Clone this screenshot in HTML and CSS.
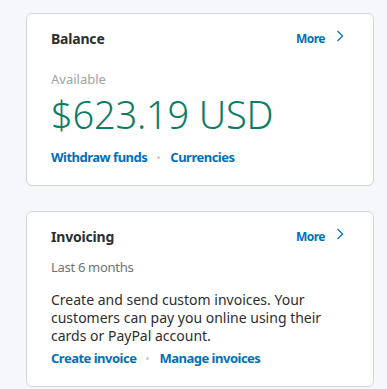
FILE: index.html
```html
<!DOCTYPE html>
<html lang="en">
<head>
    <meta charset="UTF-8">
    <meta name="viewport" content="width=device-width, initial-scale=1.0">
    <title>Summary</title>
    <link rel="stylesheet" href="styles.css">
</head>
<body>

    <div class="column">
        <div class="card" id="balance-card">
            <div class="card-head">
                <h2>Balance</h2>
                <a class="more" href="#">More
                    <svg class="chevron" width="8" height="12" viewBox="0 0 8 12"><path d="M1.5 1 L6.5 6 L1.5 11" fill="none" stroke="#0070ba" stroke-width="1.2"/></svg>
                </a>
            </div>
            <p class="label">Available</p>
            <p class="amount">$623.19 USD</p>
            <div class="links">
                <a href="#">Withdraw funds</a>
                <span class="dot"></span>
                <a href="#">Currencies</a>
            </div>
        </div>

        <div class="card" id="invoice-card">
            <div class="card-head">
                <h2>Invoicing</h2>
                <a class="more" href="#">More
                    <svg class="chevron" width="8" height="12" viewBox="0 0 8 12"><path d="M1.5 1 L6.5 6 L1.5 11" fill="none" stroke="#0070ba" stroke-width="1.2"/></svg>
                </a>
            </div>
            <p class="period">Last 6 months</p>
            <p class="text">Create and send custom invoices. Your customers can pay you online using their cards or PayPal account.</p>
            <div class="links">
                <a href="#">Create invoice</a>
                <span class="dot"></span>
                <a href="#">Manage invoices</a>
            </div>
        </div>
    </div>

</body>
</html>
```

FILE: styles.css
```css
body {
    font-family: 'Noto Sans', 'Open Sans', sans-serif;
    background-color: #f5f7fa;
    margin: 0;
    padding: 0;
    color: #2c2e2f;
}

.column {
    width: 348px;
    margin-left: 26px;
    padding-top: 13px;
    display: flex;
    flex-direction: column;
    gap: 25px;
}

.card {
    background-color: #fff;
    border: 1px solid #d3d5d8;
    border-radius: 6px;
    padding: 13px 29px 18px 24px;
}

.card-head {
    display: flex;
    justify-content: space-between;
    align-items: center;
    height: 22px;
}

h2 {
    margin: 0;
    font-size: 14px;
    font-weight: bold;
    letter-spacing: -0.2px;
    color: #2c2e2f;
}

.more {
    display: flex;
    align-items: center;
    gap: 11px;
    font-size: 12px;
    font-weight: bold;
    letter-spacing: -0.5px;
    color: #0070ba;
    text-decoration: none;
}

.chevron {
    margin-top: -4px;
}

.label {
    margin: 20px 0 0;
    font-size: 13px;
    line-height: 20px;
    color: #9da3a6;
}

.amount {
    margin: 0;
    font-size: 38px;
    font-weight: 300;
    letter-spacing: -0.2px;
    line-height: 50px;
    color: #0b7d66;
}

.links {
    display: flex;
    align-items: center;
    gap: 10px;
    margin-top: 8px;
    line-height: 20px;
}

.links a {
    font-size: 13px;
    font-weight: bold;
    letter-spacing: -0.5px;
    color: #0070ba;
    text-decoration: none;
}

.dot {
    width: 3px;
    height: 3px;
    border-radius: 50%;
    background-color: #c9ccce;
}

.period {
    margin: 10px 0 0;
    font-size: 13px;
    letter-spacing: -0.3px;
    line-height: 20px;
    color: #6c7378;
}

.text {
    margin: 14px 0 0;
    font-size: 14px;
    line-height: 18px;
    color: #2c2e2f;
}

#invoice-card .links {
    margin-top: 3px;
}
```
